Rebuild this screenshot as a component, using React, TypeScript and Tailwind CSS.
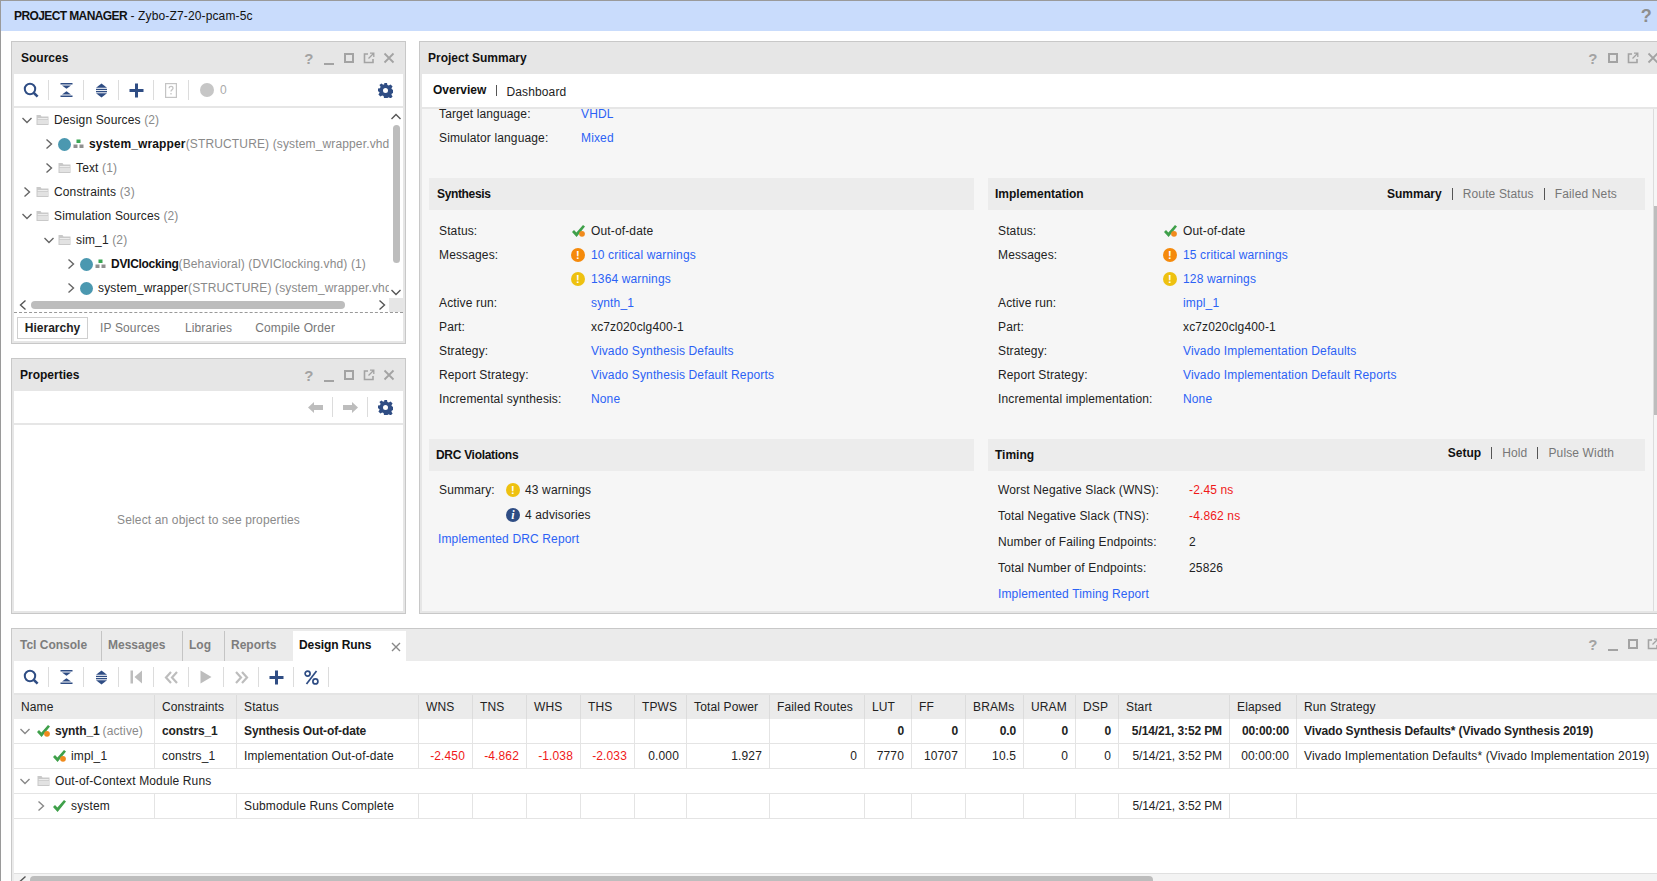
import type { ReactNode } from "react";

const NAVY = "#2f4d84";

function Chev({ dir, className = "", color = "#666" }: { dir: "up" | "down" | "left" | "right"; className?: string; color?: string }) {
  const d = {
    up: "M2.5 9 7 4.5 11.5 9",
    down: "M2.5 5 7 9.5 11.5 5",
    left: "M9.5 2.5 4.5 7 9.5 11.5",
    right: "M4.5 2.5 9.5 7 4.5 11.5",
  }[dir];
  return (
    <svg width="14" height="14" viewBox="0 0 14 14" fill="none" stroke={color} strokeWidth="1.4" className={`shrink-0 ${className}`}>
      <path d={d} />
    </svg>
  );
}

function PanelIcons({ minimize = true, close = true }: { minimize?: boolean; close?: boolean }) {
  return (
    <div className="flex items-center text-[#a3a3a3]">
      <span className="w-5 text-center text-[15px] leading-none font-bold">?</span>
      {minimize && (
        <span className="flex h-5 w-5 items-end justify-center pb-[3px]">
          <span className="h-[2px] w-[10px] bg-[#a3a3a3]" />
        </span>
      )}
      <span className="flex h-5 w-5 items-center justify-center">
        <span className="h-[10px] w-[10px] border-2 border-[#a3a3a3]" />
      </span>
      <span className="flex h-5 w-5 items-center justify-center">
        <svg width="12" height="12" viewBox="0 0 12 12" fill="none" stroke="#a3a3a3" strokeWidth="1.6">
          <path d="M5 2H1.5v8.5H10V7" />
          <path d="M5.5 6.5 10.5 1.5M7 1.2h3.8V5" strokeWidth="1.3" />
        </svg>
      </span>
      {close && (
        <span className="flex h-5 w-5 items-center justify-center">
          <svg width="12" height="12" viewBox="0 0 12 12" stroke="#a3a3a3" strokeWidth="1.8">
            <path d="M1.5 1.5 10.5 10.5M10.5 1.5 1.5 10.5" />
          </svg>
        </span>
      )}
    </div>
  );
}

function SearchIcon() {
  return (
    <svg width="16" height="16" viewBox="0 0 16 16" fill="none" stroke={NAVY} strokeWidth="2">
      <circle cx="7" cy="7" r="5.2" />
      <path d="M10.8 10.8 14.6 14.6" strokeWidth="2.6" />
    </svg>
  );
}

function CollapseIcon() {
  return (
    <svg width="13" height="14" viewBox="0 0 13 14" fill={NAVY}>
      <rect x="0.5" y="0" width="12" height="1.5" />
      <path d="M2 2.5h9L6.5 5.8z" />
      <path d="M2 11.5h9L6.5 8.2z" />
      <rect x="0.5" y="12.5" width="12" height="1.5" />
    </svg>
  );
}

function ExpandIcon() {
  return (
    <svg width="13" height="15" viewBox="0 0 13 15" fill={NAVY}>
      <path d="M6.5 0.5 12 4.8H1z" />
      <rect x="1" y="5.8" width="11" height="1.3" />
      <rect x="1" y="8" width="11" height="1.3" />
      <path d="M6.5 14.5 12 10.2H1z" />
    </svg>
  );
}

function PlusIcon() {
  return (
    <svg width="15" height="15" viewBox="0 0 15 15" fill={NAVY}>
      <rect x="6" y="0.5" width="3" height="14" />
      <rect x="0.5" y="6" width="14" height="3" />
    </svg>
  );
}

function GearIcon() {
  return (
    <svg width="15" height="15" viewBox="0 0 15 15" className="block">
      <path
        fill={NAVY}
        fillRule="evenodd"
        d="M6 0h3l.4 2 1.4.6L12.6 1.5l2 2-1.2 1.7.7 1.4 1.9.4v3l-2 .3-.6 1.5 1.2 1.7-2 2-1.8-1.2-1.4.6L9 15H6l-.4-2-1.4-.6-1.8 1.1-2-2 1.2-1.7-.7-1.4L0 8.5v-3l2-.3.6-1.5L1.4 2l2-1.5 1.8 1.2 1.4-.6zM7.5 5a2.5 2.5 0 1 0 0 5 2.5 2.5 0 0 0 0-5z"
      />
    </svg>
  );
}

function DocHelpIcon() {
  return (
    <svg width="12" height="15" viewBox="0 0 12 15" fill="none" stroke="#c4c4c4" strokeWidth="1.2">
      <rect x="0.6" y="0.6" width="10.8" height="13.8" />
      <path d="M4.2 5.2c0-2.4 3.8-2.4 3.8 0 0 1.5-2 1.6-2 3.3M6 10v1.6" strokeWidth="1.3" />
    </svg>
  );
}

function FirstIcon() {
  return (
    <svg width="13" height="14" viewBox="0 0 13 14" fill="#bdbdbd">
      <rect x="0.5" y="0.5" width="2.5" height="13" />
      <path d="M12 0.5v13L4.5 7z" />
    </svg>
  );
}

function DoubleChevron({ left }: { left?: boolean }) {
  return (
    <svg width="15" height="13" viewBox="0 0 15 13" fill="none" stroke="#bdbdbd" strokeWidth="2.2">
      <path d={left ? "M7 1 2 6.5 7 12M13 1 8 6.5 13 12" : "M2 1l5 5.5L2 12M8 1l5 5.5L8 12"} />
    </svg>
  );
}

function PlayIcon() {
  return (
    <svg width="12" height="14" viewBox="0 0 12 14" fill="#bdbdbd">
      <path d="M0.5 0.5v13L11.5 7z" />
    </svg>
  );
}

function PercentIcon() {
  return (
    <svg width="15" height="15" viewBox="0 0 15 15" fill="none" stroke={NAVY} strokeWidth="1.7">
      <circle cx="3.6" cy="3.6" r="2.5" />
      <circle cx="11.4" cy="11.4" r="2.5" />
      <path d="M12.5 1 2.5 14" />
    </svg>
  );
}

function ArrowIcon({ left }: { left?: boolean }) {
  return (
    <svg width="15" height="11" viewBox="0 0 15 11" fill="#bdbdbd">
      <path d={left ? "M0 5.5 6 0v3h9v5H6v3z" : "M15 5.5 9 0v3H0v5h9v3z"} />
    </svg>
  );
}

function Folder() {
  return (
    <svg width="13" height="12" viewBox="0 0 13 12">
      <path fill="#c9c9c9" d="M0.5 1h4l1 1.5h7V11H.5z" />
      <path fill="#ededed" d="M1.7 4h10v1.2h-10z" />
      <path fill="#e2e2e2" d="M1.5 6h10.7L12 10H1.5z" />
    </svg>
  );
}

function Hier() {
  return (
    <svg width="11" height="10" viewBox="0 0 11 10">
      <rect x="3.5" y="0.5" width="4" height="3.5" fill="#3aa655" />
      <rect x="0.5" y="5.5" width="4" height="3.5" fill="#8f8f8f" />
      <rect x="6.5" y="5.5" width="4" height="3.5" fill="#8f8f8f" />
    </svg>
  );
}

function Check({ orange = true }: { orange?: boolean }) {
  return (
    <svg width="15" height="14" viewBox="0 0 15 14" className="shrink-0">
      <path d="M1 8 3 6l2.4 2.6L12 1l2 1.4L5.6 13z" fill="#3fa04a" />
      {orange && <circle cx="11" cy="9.8" r="2.9" fill="#f08a1d" />}
    </svg>
  );
}

function AlertDot({ color }: { color: string }) {
  return (
    <span
      className="flex h-[14px] w-[14px] shrink-0 items-center justify-center rounded-full text-[11px] leading-none font-bold text-white"
      style={{ backgroundColor: color }}
    >
      !
    </span>
  );
}

function InfoDot() {
  return (
    <span className="flex h-[14px] w-[14px] shrink-0 items-center justify-center rounded-full bg-[#2f4d84] font-['Liberation_Serif',serif] text-[12px] leading-none font-bold text-white italic">
      i
    </span>
  );
}

function ToolSep() {
  return <span className="h-5 w-px shrink-0 bg-[#dcdcdc]" />;
}

function ToolBtn({ children }: { children: ReactNode }) {
  return (
    <>
      <span className="flex w-[34px] shrink-0 items-center justify-center">{children}</span>
      <ToolSep />
    </>
  );
}

function Panel({ className, children }: { className: string; children: ReactNode }) {
  return (
    <div className={`flex flex-col border border-[#c8c8c8] bg-[#e6e6e6] px-[2px] pb-[2px] ${className}`}>
      {children}
    </div>
  );
}

function PanelHeader({ title, icons, nudge = false }: { title: string; icons: ReactNode; nudge?: boolean }) {
  return (
    <div className="flex h-[32px] shrink-0 items-center justify-between pr-[4px] pl-[7px]">
      <span className={`-mt-[1px] font-bold tracking-normal text-[#111] ${nudge ? "-ml-px" : ""}`}>{title}</span>
      {icons}
    </div>
  );
}

type TreeRow = {
  depth: number;
  open?: boolean;
  folder?: boolean;
  boldClass?: string;
  hier?: boolean;
  name: string;
  rest: string;
};

const treeRows: TreeRow[] = [
  { depth: 0, open: true, folder: true, name: "Design Sources", rest: " (2)" },
  { depth: 1, boldClass: "font-bold text-[#111]", hier: true, name: "system_wrapper", rest: "(STRUCTURE) (system_wrapper.vhd) (6)" },
  { depth: 1, folder: true, name: "Text", rest: " (1)" },
  { depth: 0, folder: true, name: "Constraints", rest: " (3)" },
  { depth: 0, open: true, folder: true, name: "Simulation Sources", rest: " (2)" },
  { depth: 1, open: true, folder: true, name: "sim_1", rest: " (2)" },
  { depth: 2, boldClass: "font-bold tracking-[-0.29px] text-[#111]", hier: true, name: "DVIClocking", rest: "(Behavioral) (DVIClocking.vhd) (1)" },
  { depth: 2, name: "system_wrapper", rest: "(STRUCTURE) (system_wrapper.vhd) (6)" },
];

const depthPad = ["pl-[6px]", "pl-[28px]", "pl-[50px]"];

function SourcesPanel() {
  return (
    <Panel className="h-[303px]">
      <PanelHeader title="Sources" icons={<PanelIcons />} />
      <div className="flex h-[32px] shrink-0 items-center bg-white">
        <ToolBtn><SearchIcon /></ToolBtn>
        <ToolBtn><CollapseIcon /></ToolBtn>
        <ToolBtn><ExpandIcon /></ToolBtn>
        <ToolBtn><PlusIcon /></ToolBtn>
        <ToolBtn><DocHelpIcon /></ToolBtn>
        <span className="ml-[11px] h-[14px] w-[14px] rounded-full bg-[#c6c6c6]" />
        <span className="ml-[6px] text-[#aaa]">0</span>
        <span className="ml-auto pr-[10px]"><GearIcon /></span>
      </div>
      <div className="mt-[2px] flex min-h-0 flex-1 flex-col bg-white">
        <div className="flex min-h-0 flex-1">
          <div className="min-w-0 flex-1 overflow-hidden">
            {treeRows.map((r) => (
              <div key={r.name + r.depth} className={`flex h-6 items-center whitespace-nowrap ${depthPad[r.depth]}`}>
                <Chev dir={r.open ? "down" : "right"} />
                {r.folder && (
                  <span className="mr-[5px] ml-[2px] flex w-[13px] shrink-0 justify-center"><Folder /></span>
                )}
                {!r.folder && (
                  <span className="ml-[2px] h-[13px] w-[13px] shrink-0 rounded-full bg-[#4b98b0]" />
                )}
                {r.hier && <span className="mr-[5px] ml-[2px] flex shrink-0"><Hier /></span>}
                {!r.folder && !r.hier && <span className="w-[5px] shrink-0" />}
                <span className={r.boldClass ?? "text-[#222]"}>{r.name}</span>
                <span className="whitespace-pre text-[#8a8a8a]">{r.rest}</span>
              </div>
            ))}
          </div>
          <div className="flex w-[14px] shrink-0 flex-col items-center bg-white">
            <Chev dir="up" color="#555" className="mt-[2px]" />
            <span className="mt-[1px] h-[138px] w-[7px] rounded-[4px] bg-[#bdbdbd]" />
            <Chev dir="down" color="#555" className="mt-auto mb-[-1px]" />
          </div>
        </div>
        <div className="flex h-[14px] shrink-0 items-center">
          <Chev dir="left" color="#555" className="ml-[2px]" />
          <span className="ml-[1px] h-[8px] w-[315px] rounded-[4px] bg-[#bdbdbd]" />
          <Chev dir="right" color="#555" className="ml-[30px]" />
          <span className="ml-auto h-full w-[14px] bg-[#e6e6e6]" />
        </div>
        <div className="flex h-[29px] shrink-0 items-center border-t border-dashed border-[#999] pt-[1px] pl-[3px]">
          <span className="flex h-[22px] w-[71px] items-center justify-center border border-[#cfcfcf] font-bold tracking-normal text-[#222]">
            Hierarchy
          </span>
          <span className="ml-[12px] text-[#777]">IP Sources</span>
          <span className="ml-[25px] text-[#777]">Libraries</span>
          <span className="ml-[23px] text-[#777]">Compile Order</span>
        </div>
      </div>
    </Panel>
  );
}

function PropertiesPanel() {
  return (
    <Panel className="mt-[14px] h-[256px]">
      <PanelHeader title="Properties" icons={<PanelIcons />} nudge />
      <div className="flex h-[32px] shrink-0 items-center justify-end bg-white pr-[10px]">
        <span className="flex w-[33px] justify-center"><ArrowIcon left /></span>
        <ToolSep />
        <span className="flex w-[34px] justify-center"><ArrowIcon /></span>
        <ToolSep />
        <span className="ml-[10px]"><GearIcon /></span>
      </div>
      <div className="mt-[2px] flex flex-1 items-center justify-center bg-white pt-[4px] text-[#8a8a8a]">
        Select an object to see properties
      </div>
    </Panel>
  );
}

function Link({ children }: { children: ReactNode }) {
  return <span className="text-[#2b62f5]">{children}</span>;
}

function SectionBar({ title, children, className = "" }: { title: string; children?: ReactNode; className?: string }) {
  return (
    <div className="flex h-[32px] items-center justify-between bg-[#ececec]">
      <span className={`font-bold text-[#111] ${className}`}>{title}</span>
      {children}
    </div>
  );
}

function SubTabs({ items, className = "" }: { items: string[]; className?: string }) {
  return (
    <div className={`flex items-center ${className}`}>
      {items.map((t, i) => (
        <span key={t} className="flex items-center">
          {i > 0 && <span className="mx-[10px] h-[12px] w-px bg-[#555]" />}
          <span className={i === 0 ? "font-bold tracking-normal text-[#111]" : "text-[#777]"}>{t}</span>
        </span>
      ))}
    </div>
  );
}

function InfoRows({ valueX, rows }: { valueX: string; rows: { label: string; icon?: ReactNode; value: ReactNode }[] }) {
  return (
    <div className="mt-[9px] pl-[10px]">
      {rows.map((r, i) => (
        <div key={i} className="flex h-6 items-center">
          <span className={`${valueX} shrink-0 text-[#222]`}>{r.label}</span>
          <span className="flex w-[14px] shrink-0 justify-center">{r.icon}</span>
          <span className="ml-[6px] text-[#222]">{r.value}</span>
        </div>
      ))}
    </div>
  );
}

function SummaryPanel() {
  return (
    <Panel className="h-[573px] w-[1260px] shrink-0">
      <PanelHeader
        title="Project Summary"
        nudge
        icons={<span className="mr-[9px]"><PanelIcons minimize={false} /></span>}
      />
      <div className="flex h-[33px] shrink-0 items-start bg-white pl-[11px]">
        <span className="mt-[10px] font-bold tracking-normal text-[#111]">Overview</span>
        <span className="mt-[11px] mr-[9px] ml-[10px] h-[11px] w-px bg-[#555]" />
        <span className="mt-[12px] text-[#222]">Dashboard</span>
      </div>
      <div className="mt-[2px] flex flex-1 overflow-hidden bg-[#f6f6f6] text-[#222]">
        <div className="w-[1232px] shrink-0 overflow-hidden border-r border-[#dcdcdc]">
          <div className="pl-[17px]">
            <div className="flex h-[9px] items-center">
              <span className="w-[142px] shrink-0">Target language:</span>
              <Link>VHDL</Link>
            </div>
            <div className="mt-[15px] flex h-[9px] items-center">
              <span className="w-[142px] shrink-0">Simulator language:</span>
              <Link>Mixed</Link>
            </div>
          </div>
          <div className="mt-[36px] grid grid-cols-[545px_657px] gap-x-[14px] pl-[7px]">
            <div>
              <SectionBar title="Synthesis" className="ml-[8px] tracking-[-0.35px]" />
              <InfoRows
                valueX="w-[132px]"
                rows={[
                  { label: "Status:", icon: <Check />, value: "Out-of-date" },
                  { label: "Messages:", icon: <AlertDot color="#f58a0b" />, value: <Link>10 critical warnings</Link> },
                  { label: "", icon: <AlertDot color="#eec110" />, value: <Link>1364 warnings</Link> },
                  { label: "Active run:", value: <Link>synth_1</Link> },
                  { label: "Part:", value: "xc7z020clg400-1" },
                  { label: "Strategy:", value: <Link>Vivado Synthesis Defaults</Link> },
                  { label: "Report Strategy:", value: <Link>Vivado Synthesis Default Reports</Link> },
                  { label: "Incremental synthesis:", value: <Link>None</Link> },
                ]}
              />
            </div>
            <div>
              <SectionBar title="Implementation" className="ml-[7px] tracking-normal">
                <SubTabs items={["Summary", "Route Status", "Failed Nets"]} className="mr-[28px]" />
              </SectionBar>
              <InfoRows
                valueX="w-[165px]"
                rows={[
                  { label: "Status:", icon: <Check />, value: "Out-of-date" },
                  { label: "Messages:", icon: <AlertDot color="#f58a0b" />, value: <Link>15 critical warnings</Link> },
                  { label: "", icon: <AlertDot color="#eec110" />, value: <Link>128 warnings</Link> },
                  { label: "Active run:", value: <Link>impl_1</Link> },
                  { label: "Part:", value: "xc7z020clg400-1" },
                  { label: "Strategy:", value: <Link>Vivado Implementation Defaults</Link> },
                  { label: "Report Strategy:", value: <Link>Vivado Implementation Default Reports</Link> },
                  { label: "Incremental implementation:", value: <Link>None</Link> },
                ]}
              />
            </div>
            <div className="mt-[28px]">
              <SectionBar title="DRC Violations" className="ml-[7px] tracking-[-0.3px]" />
              <div className="mt-[7px] pl-[10px]">
                <div className="flex h-6 items-center">
                  <span className="w-[67px] shrink-0">Summary:</span>
                  <AlertDot color="#eec110" />
                  <span className="ml-[5px]">43 warnings</span>
                </div>
                <div className="mt-px flex h-6 items-center pl-[67px]">
                  <InfoDot />
                  <span className="ml-[5px]">4 advisories</span>
                </div>
                <div className="-ml-px flex h-6 items-center">
                  <Link>Implemented DRC Report</Link>
                </div>
              </div>
            </div>
            <div className="mt-[28px]">
              <SectionBar title="Timing" className="ml-[7px] tracking-normal">
                <SubTabs items={["Setup", "Hold", "Pulse Width"]} className="mr-[31px] -mt-[4px]" />
              </SectionBar>
              <div className="mt-[6px] pl-[10px]">
                {[
                  ["Worst Negative Slack (WNS):", "-2.45 ns", true],
                  ["Total Negative Slack (TNS):", "-4.862 ns", true],
                  ["Number of Failing Endpoints:", "2", false],
                  ["Total Number of Endpoints:", "25826", false],
                ].map(([label, val, red]) => (
                  <div key={label as string} className="flex h-[26px] items-center">
                    <span className="w-[191px] shrink-0">{label}</span>
                    <span className={red ? "text-[#f01818]" : ""}>{val}</span>
                  </div>
                ))}
                <div className="flex h-[26px] items-center">
                  <Link>Implemented Timing Report</Link>
                </div>
              </div>
            </div>
          </div>
        </div>
        <span className="mt-[97px] h-[209px] w-[3px] shrink-0 bg-[#bdbdbd]" />
      </div>
    </Panel>
  );
}

const gridCols =
  "grid-cols-[141px_82px_182px_54px_54px_54px_54px_52px_83px_95px_47px_54px_58px_52px_43px_111px_67px_400px]";

const headers = [
  "Name", "Constraints", "Status", "WNS", "TNS", "WHS", "THS", "TPWS", "Total Power",
  "Failed Routes", "LUT", "FF", "BRAMs", "URAM", "DSP", "Start", "Elapsed", "Run Strategy",
];

function Cell({ children, left = false, red = false, tight = false }: { children?: ReactNode; left?: boolean; red?: boolean; tight?: boolean }) {
  return (
    <div
      className={`flex items-center overflow-hidden border-r border-[#e4e4e4] px-[7px] whitespace-nowrap ${
        left ? "justify-start" : "justify-end"
      } ${red ? "text-[#f01818]" : ""} ${tight ? "tracking-[-0.12px]" : ""}`}
    >
      {children}
    </div>
  );
}

function RunRow({ name, cells, bold = false }: { name: ReactNode; cells: (string | null)[]; bold?: boolean }) {
  return (
    <div className={`grid h-[25px] border-b border-[#e4e4e4] ${gridCols} ${bold ? "font-bold tracking-[-0.12px]" : ""} text-[#222]`}>
      <div className="flex items-center overflow-hidden border-r border-[#e4e4e4] whitespace-nowrap">{name}</div>
      {cells.map((c, i) => (
        <Cell key={i} left={i < 2 || i === 16} red={c !== null && c.startsWith("-")} tight={c !== null && c.endsWith("PM")}>
          {c}
        </Cell>
      ))}
    </div>
  );
}

function DesignRunsPanel() {
  return (
    <div className="mt-[14px] flex h-[253px] w-[1680px] shrink-0 flex-col border-t border-l border-[#c8c8c8] bg-[#ebebeb] pl-[2px]">
      <div className="flex h-[32px] shrink-0 items-end">
        <div className="flex h-[30px] items-center font-bold tracking-normal text-[#7d7d7d]">
          <span className="flex h-full w-[88px] items-center border-r border-[#c4c4c4] pb-[2px] pl-[6px]">Tcl Console</span>
          <span className="flex h-full w-[81px] items-center border-r border-[#c4c4c4] pb-[2px] pl-[6px]">Messages</span>
          <span className="flex h-full w-[42px] items-center border-r border-[#c4c4c4] pb-[2px] pl-[6px]">Log</span>
          <span className="flex h-full w-[68px] items-center pb-[2px] pl-[6px]">Reports</span>
        </div>
        <div className="flex h-[30px] w-[113px] items-center justify-between bg-white pr-[5px] pb-[2px] pl-[6px]">
          <span className="font-bold tracking-[-0.1px] text-[#111]">Design Runs</span>
          <svg width="10" height="10" viewBox="0 0 10 10" stroke="#888" strokeWidth="1.4" className="mt-[4px]">
            <path d="M1 1 9 9M9 1 1 9" />
          </svg>
        </div>
        <span className="mb-[2px] ml-auto self-center pr-[28px]"><PanelIcons close={false} /></span>
      </div>
      <div className="flex h-[32px] shrink-0 items-center bg-white">
        <ToolBtn><SearchIcon /></ToolBtn>
        <ToolBtn><CollapseIcon /></ToolBtn>
        <ToolBtn><ExpandIcon /></ToolBtn>
        <ToolBtn><FirstIcon /></ToolBtn>
        <ToolBtn><DoubleChevron left /></ToolBtn>
        <ToolBtn><PlayIcon /></ToolBtn>
        <ToolBtn><DoubleChevron /></ToolBtn>
        <ToolBtn><PlusIcon /></ToolBtn>
        <ToolBtn><PercentIcon /></ToolBtn>
      </div>
      <div className={`grid h-[26px] shrink-0 ${gridCols} border-t-2 border-[#e4e4e4] bg-[#ebebeb] text-[#222]`}>
        {headers.map((h) => (
          <div key={h} className="flex items-center overflow-hidden border-r border-[#dcdcdc] px-[7px] whitespace-nowrap">
            {h}
          </div>
        ))}
      </div>
      <div className="flex flex-1 flex-col bg-white">
        <RunRow
          bold
          name={
            <div className="flex items-center pl-[4px]">
              <Chev dir="down" color="#888" />
              <span className="ml-[4px] flex"><Check /></span>
              <span className="ml-[4px]">synth_1</span>
              <span className="ml-[3px] font-normal tracking-[0.14px] text-[#8a8a8a]">(active)</span>
            </div>
          }
          cells={["constrs_1", "Synthesis Out-of-date", null, null, null, null, null, null, null, "0", "0", "0.0", "0", "0", "5/14/21, 3:52 PM", "00:00:00", "Vivado Synthesis Defaults* (Vivado Synthesis 2019)"]}
        />
        <RunRow
          name={
            <div className="flex items-center pl-[38px]">
              <Check />
              <span className="ml-[4px]">impl_1</span>
            </div>
          }
          cells={["constrs_1", "Implementation Out-of-date", "-2.450", "-4.862", "-1.038", "-2.033", "0.000", "1.927", "0", "7770", "10707", "10.5", "0", "0", "5/14/21, 3:52 PM", "00:00:00", "Vivado Implementation Defaults* (Vivado Implementation 2019)"]}
        />
        <div className="flex h-[25px] items-center border-b border-[#e4e4e4] pl-[4px] text-[#222]">
          <Chev dir="down" color="#888" />
          <span className="mr-[5px] ml-[5px] flex"><Folder /></span>
          Out-of-Context Module Runs
        </div>
        <RunRow
          name={
            <div className="flex items-center pl-[20px]">
              <Chev dir="right" color="#888" />
              <span className="ml-[4px] flex"><Check orange={false} /></span>
              <span className="ml-[4px]">system</span>
            </div>
          }
          cells={["", "Submodule Runs Complete", null, null, null, null, null, null, null, null, null, null, null, null, "5/14/21, 3:52 PM", null, null]}
        />
      </div>
      <div className="flex h-[8px] shrink-0 items-end overflow-hidden border-t border-[#e0e0e0] bg-[#f3f3f3]">
        <Chev dir="left" color="#555" className="-mb-[7px] ml-[2px]" />
        <span className="h-[5px] w-[1123px] rounded-t-[4px] bg-[#bdbdbd]" />
      </div>
    </div>
  );
}

export default function App() {
  return (
    <div className="h-[881px] w-[1657px] overflow-hidden border-t border-l border-[#9a9a9a] bg-white font-['Liberation_Sans',Arial,sans-serif] text-[12px] leading-none tracking-[0.14px]">
      <div className="flex h-[30px] items-center justify-between bg-[#c9dcfc] pr-[5px] pl-[13px]">
        <span className="text-[#111]">
          <span className="font-bold tracking-[-0.6px]">PROJECT MANAGER</span> - Zybo-Z7-20-pcam-5c
        </span>
        <span className="text-[18px] font-bold text-[#8e8e8e]">?</span>
      </div>
      <div className="pt-[10px] pl-[10px]">
        <div className="flex gap-[13px]">
          <div className="w-[395px] shrink-0">
            <SourcesPanel />
            <PropertiesPanel />
          </div>
          <SummaryPanel />
        </div>
        <DesignRunsPanel />
      </div>
    </div>
  );
}
